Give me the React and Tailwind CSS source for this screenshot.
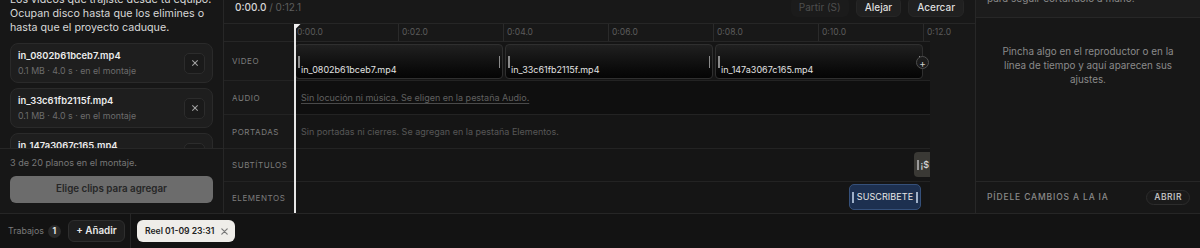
import React from "react";

const PX_PER_S = 52.5;

function XIcon({ className = "", size = 8 }) {
  return (
    <svg width={size} height={size} viewBox="0 0 10 10" className={className} fill="none" stroke="currentColor" strokeWidth="1.3" strokeLinecap="round">
      <path d="M2 2 L8 8 M8 2 L2 8" />
    </svg>
  );
}

function FileCard({ name }) {
  return (
    <div className="h-[40px] shrink-0 rounded-[8px] border border-[#2a2a2a] bg-[#1e1e1e] flex items-center justify-between pl-[7px] pr-[7px]">
      <div className="flex flex-col">
        <div className="text-[9.4px] font-semibold text-[#ececec] leading-[13px]">{name}</div>
        <div className="text-[8.8px] text-[#6c6c6c] leading-[12px] mt-[3px]">0.1 MB · 4.0 s · en el montaje</div>
      </div>
      <div className="w-[21px] h-[21px] rounded-[5px] border border-[#2c2c2c] bg-[#1a1a1a] flex items-center justify-center text-[#a0a0a0]">
        <XIcon size={8} />
      </div>
    </div>
  );
}

function VideoClip({ index, name, last }) {
  return (
    <div
      className="absolute top-[2px] h-[35px] w-[208px] rounded-[4px] border border-[#2f2f2f] bg-gradient-to-b from-[#202020] to-[#050505]"
      style={{ left: index * 210 + 1 }}
    >
      <div className="absolute left-[2px] top-[11px] h-[12px] w-[1.5px] bg-[#8a8a8a]" />
      <div className="absolute right-[2px] top-[11px] h-[12px] w-[1.5px] bg-[#8a8a8a]" />
      <div className="absolute left-[5px] top-[19px] text-[9px] leading-[12px] text-[#e2e2e2] whitespace-nowrap">{name}</div>
      {last && (
        <div className="absolute -right-[7px] top-[11px] w-[13px] h-[13px] rounded-full border border-[#4e4e4e] bg-[#1b1b1b] flex items-center justify-center text-[#cfcfcf] text-[10px] leading-none">
          +
        </div>
      )}
    </div>
  );
}

function RowLabel({ children }) {
  return (
    <div className="w-[70px] shrink-0 flex items-center pl-[8px] text-[8px] tracking-[0.07em] text-[#7c7c7c] uppercase">
      {children}
    </div>
  );
}

export default function App() {
  const ticks = [0, 2, 4, 6, 8, 10, 12];
  return (
    <div className="w-[1200px] h-[248px] overflow-hidden bg-[#171717] text-[#d4d4d4] flex flex-col font-['Inter','Noto_Sans',sans-serif]">
      <div className="flex h-[214px] shrink-0 border-b border-[#262626]">
        {/* Left panel */}
        <aside className="w-[224px] shrink-0 border-r border-[#272727] flex flex-col bg-[#171717]">
          <div className="flex-1 overflow-hidden px-[10px]">
            <p className="-mt-[7px] text-[10.7px] leading-[14px] text-[#d8d8d8] whitespace-nowrap">
              Los vídeos que trajiste desde tu equipo.
              <br />
              Ocupan disco hasta que los elimines o
              <br />
              hasta que el proyecto caduque.
            </p>
            <div className="mt-[8px] flex flex-col gap-[5px]">
              <FileCard name="in_0802b61bceb7.mp4" />
              <FileCard name="in_33c61fb2115f.mp4" />
              <FileCard name="in_147a3067c165.mp4" />
            </div>
          </div>
          <div className="h-[65px] shrink-0 border-t border-[#272727] px-[10px] pt-[8px]">
            <div className="text-[9.1px] text-[#777777] leading-[12px]">3 de 20 planos en el montaje.</div>
            <div className="mt-[7px] w-full h-[27px] rounded-[6px] bg-[#6c6c6c] text-[#262626] text-[9.8px] font-semibold flex items-center justify-center">
              Elige clips para agregar
            </div>
          </div>
        </aside>

        {/* Center */}
        <section className="w-[752px] shrink-0 border-r border-[#272727] flex flex-col bg-[#181818]">
          <header className="h-[24px] shrink-0 border-b border-[#262626] flex items-end justify-between pl-[11px] pr-[11px] pb-[6px]">
            <div className="h-[20px] leading-[20px] text-[10px]">
              <span className="text-[#d6d6d6] font-medium">0:00.0</span>
              <span className="text-[#5e5e5e]"> / 0:12.1</span>
            </div>
            <div className="flex items-end gap-[7px]">
              <div className="h-[20px] px-[8px] rounded-[6px] bg-[#1b1b1b] text-[#4e4e4e] text-[10px] flex items-center">Partir (S)</div>
              <div className="h-[20px] px-[8px] rounded-[6px] border border-[#262626] bg-[#202020] text-[#dedede] text-[10px] font-medium flex items-center">Alejar</div>
              <div className="h-[20px] px-[8px] rounded-[6px] border border-[#262626] bg-[#202020] text-[#dedede] text-[10px] font-medium flex items-center">Acercar</div>
            </div>
          </header>

          <div className="flex-1 relative flex">
            <div className="w-[706px] shrink-0 flex flex-col">
              {/* Ruler */}
              <div className="h-[18px] shrink-0 border-b border-[#262626] flex">
                <div className="w-[70px] shrink-0" />
                <div className="relative flex-1">
                  {ticks.map((t) => (
                    <div key={t} className="absolute top-0 h-full" style={{ left: t * PX_PER_S }}>
                      {t > 0 && <div className="absolute -left-[1px] top-0 h-full w-px bg-[#2a2a2a]" />}
                      <div className="absolute left-[3px] top-0 h-full flex items-center text-[8.5px] text-[#5c5c5c] whitespace-nowrap">
                        0:{t < 10 ? "0" + t : t}.0
                      </div>
                    </div>
                  ))}
                </div>
              </div>

              {/* Video */}
              <div className="h-[39px] shrink-0 border-b border-[#232323] flex">
                <RowLabel>Video</RowLabel>
                <div className="relative flex-1 bg-[#151515]">
                  <VideoClip index={0} name="in_0802b61bceb7.mp4" />
                  <VideoClip index={1} name="in_33c61fb2115f.mp4" />
                  <VideoClip index={2} name="in_147a3067c165.mp4" last />
                </div>
              </div>

              {/* Audio */}
              <div className="h-[34px] shrink-0 border-b border-[#232323] flex">
                <RowLabel>Audio</RowLabel>
                <div className="flex-1 bg-[#0f0f0f] flex items-center pl-[7px]">
                  <span className="text-[9px] text-[#606060] underline decoration-[#4a4a4a] underline-offset-2 whitespace-nowrap">
                    Sin locución ni música. Se eligen en la pestaña Audio.
                  </span>
                </div>
              </div>

              {/* Portadas */}
              <div className="h-[34px] shrink-0 border-b border-[#232323] flex">
                <RowLabel>Portadas</RowLabel>
                <div className="flex-1 bg-[#151515] flex items-center pl-[7px]">
                  <span className="text-[9px] text-[#575757] whitespace-nowrap">
                    Sin portadas ni cierres. Se agregan en la pestaña Elementos.
                  </span>
                </div>
              </div>

              {/* Subtitulos */}
              <div className="h-[33px] shrink-0 border-b border-[#232323] flex">
                <RowLabel>Subtítulos</RowLabel>
                <div className="relative flex-1 bg-[#151515] overflow-hidden">
                  <div className="absolute left-[620px] top-[3px] h-[25px] w-[40px] rounded-[4px] bg-[#3a3935] flex items-center pl-[3px] gap-[2px]">
                    <div className="h-[10px] w-[1.5px] bg-[#9a9a9a]" />
                    <span className="text-[9px] font-medium text-[#dadada]">¡$</span>
                  </div>
                </div>
              </div>

              {/* Elementos */}
              <div className="flex-1 flex">
                <RowLabel>Elementos</RowLabel>
                <div className="relative flex-1 bg-[#151515]">
                  <div className="absolute left-[555px] top-[2px] h-[26px] w-[72px] rounded-[5px] border border-[#35507a] bg-[#1d3050] flex items-center justify-between px-[2px]">
                    <div className="h-[11px] w-[1.5px] bg-[#9fb0c8]" />
                    <span className="text-[9px] text-[#e6e6e6] tracking-[0.01em]">SUSCRIBETE</span>
                    <div className="h-[11px] w-[1.5px] bg-[#9fb0c8]" />
                  </div>
                </div>
              </div>
            </div>
            <div className="flex-1" />

            {/* Playhead */}
            <div className="absolute left-[70px] top-0 bottom-0 w-[1.5px] bg-[#e6e6e6]" />
            <svg className="absolute left-[70px] top-0" width="7" height="7" viewBox="0 0 7 7">
              <polygon points="0,0 6.5,0 0,6.5" fill="#f0f0f0" />
            </svg>
          </div>
        </section>

        {/* Right panel */}
        <aside className="w-[224px] shrink-0 flex flex-col bg-[#171717]">
          <div className="h-[18px] shrink-0 overflow-hidden border-b border-[#272727] bg-[#1c1c1c] pl-[11px]">
            <div className="-mt-[9px] text-[10px] leading-[14px] text-[#8a8a8a] whitespace-nowrap">para seguir cortándolo a mano.</div>
          </div>
          <div className="flex-1 pt-[26px] text-center text-[9.9px] leading-[14px] text-[#8a8a8a] whitespace-nowrap">
            Pincha algo en el reproductor o en la
            <br />
            línea de tiempo y aquí aparecen sus
            <br />
            ajustes.
          </div>
          <div className="h-[32px] shrink-0 border-t border-[#272727] flex items-center justify-between pl-[11px] pr-[10px]">
            <span className="text-[8.5px] tracking-[0.1em] text-[#8a8a8a] font-medium">PÍDELE CAMBIOS A LA IA</span>
            <span className="h-[15px] px-[7px] rounded-full border border-[#2c2c2c] bg-[#1a1a1a] text-[8.5px] font-semibold tracking-[0.06em] text-[#bdbdbd] flex items-center">
              ABRIR
            </span>
          </div>
        </aside>
      </div>

      {/* Bottom bar */}
      <div className="flex-1 bg-[#131313] flex items-stretch">
        <div className="w-[131px] shrink-0 flex items-center pl-[8px] border-r border-[#262626]">
          <span className="text-[8.8px] text-[#7a7a7a]">Trabajos</span>
          <span className="ml-[4px] w-[13px] h-[13px] rounded-full bg-[#2a2a2a] text-[8.5px] font-bold text-[#e6e6e6] flex items-center justify-center">1</span>
          <span className="ml-[7px] w-[57px] h-[22px] rounded-[6px] border border-[#2e2e2e] bg-[#1e1e1e] text-[9.8px] font-semibold text-[#e8e8e8] flex items-center justify-center">
            + Añadir
          </span>
        </div>
        <div className="flex items-center pl-[6px]">
          <span className="w-[98px] h-[22px] pl-[8px] pr-[6px] rounded-[6px] bg-[#efede9] text-[8.6px] font-semibold text-[#222222] flex items-center justify-between">
            Reel 01-09 23:31
            <XIcon size={9} className="text-[#777777]" />
          </span>
        </div>
      </div>
    </div>
  );
}
